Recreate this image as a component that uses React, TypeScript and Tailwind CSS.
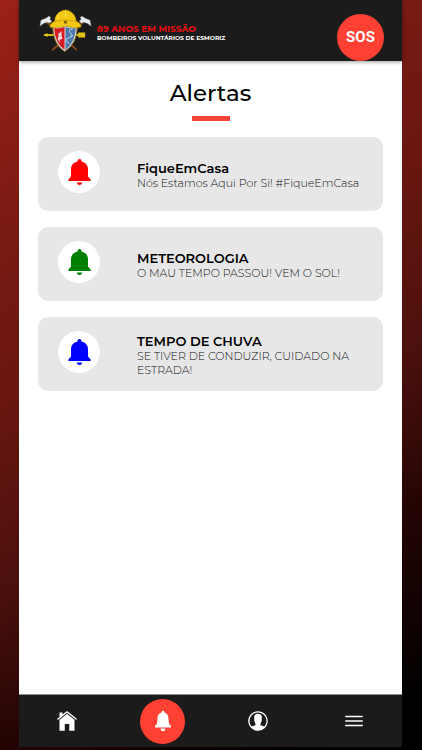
import clsx from "clsx";
import {
  IoIosContact,
  IoIosHome,
  IoIosMenu,
  IoIosNotifications,
} from "react-icons/io";

const alerts = [
  {
    title: "FiqueEmCasa",
    text: "Nós Estamos Aqui Por Si! #FiqueEmCasa",
    color: "text-[#ff0000]",
  },
  {
    title: "METEOROLOGIA",
    text: "O MAU TEMPO PASSOU! VEM O SOL!",
    color: "text-[#008000]",
  },
  {
    title: "TEMPO DE CHUVA",
    text: "SE TIVER DE CONDUZIR, CUIDADO NA ESTRADA!",
    color: "text-[#0000ff]",
  },
];

const App = () => {
  return (
    <div className="min-h-screen bg-[linear-gradient(150deg,#9c2118_0%,#771a12_25%,#6a1710_40%,#4a100d_60%,#240504_75%,#000_95%)] pr-5 pb-[3px] pl-[19px] font-['Montserrat','Inter',sans-serif] text-black">
      <div className="flex min-h-[calc(100vh-3px)] flex-col bg-white">
        <Header />
        <main className="flex-1 px-[19px] pt-[18px] pb-4">
          <h1 className="text-center text-[23px] leading-7 font-medium">
            Alertas
          </h1>
          <div className="mx-auto mt-[9px] h-[5px] w-[38px] bg-[#f44336]" />
          <ul className="mt-4 flex flex-col gap-4">
            {alerts.map((alert) => (
              <AlertCard key={alert.title} {...alert} />
            ))}
          </ul>
        </main>
        <BottomNav />
      </div>
    </div>
  );
};

export default App;

function Header() {
  return (
    <header className="flex h-[61px] items-center bg-[#1b1b1b] pr-[18px] pl-5 shadow-[0_1px_4px_rgba(0,0,0,0.4)]">
      <Crest />
      <div className="ml-[5px] flex-1 pt-1 whitespace-nowrap">
        <p className="text-[9px] leading-[10px] font-bold text-[#e60c12]">
          89 ANOS EM MISSÃO
        </p>
        <p className="text-[6px] leading-[8px] font-bold text-white">
          BOMBEIROS VOLUNTÁRIOS DE ESMORIZ
        </p>
      </div>
      <button className="size-[47px] self-end rounded-full bg-[#ff4032] font-['Roboto',sans-serif] text-[15px] font-bold text-white">
        SOS
      </button>
    </header>
  );
}

function AlertCard({
  title,
  text,
  color,
}: {
  title: string;
  text: string;
  color: string;
}) {
  return (
    <li className="flex min-h-[74px] rounded-[10px] bg-[#e7e7e7] pr-4 pl-5">
      <div className="mt-[14px] flex size-[42px] shrink-0 items-center justify-center rounded-full bg-white">
        <Bell className={clsx("h-[26px] w-[23px]", color)} />
      </div>
      <div className="ml-[37px] flex-1 self-center pt-px">
        <h2 className="text-[13px] leading-4 font-semibold">{title}</h2>
        <p className="text-[11px] leading-[14px] font-light text-[#111]">
          {text}
        </p>
      </div>
    </li>
  );
}

function BottomNav() {
  return (
    <nav className="grid h-[53px] grid-cols-4 items-center justify-items-center border-t border-[#8a8f8a] bg-[#1b1b1b] text-white">
      <a href="#home" aria-label="Início">
        <IoIosHome className="size-6" />
      </a>
      <a
        href="#alertas"
        aria-label="Alertas"
        className="flex size-[45px] items-center justify-center rounded-full bg-[#ff4032]"
      >
        <IoIosNotifications className="size-[26px]" />
      </a>
      <a href="#perfil" aria-label="Perfil">
        <IoIosContact className="size-6" />
      </a>
      <a href="#menu" aria-label="Menu">
        <IoIosMenu className="size-6" />
      </a>
    </nav>
  );
}

function Bell({ className }: { className?: string }) {
  return (
    <svg
      viewBox="0 0 23 26"
      fill="currentColor"
      className={className}
      aria-hidden="true"
    >
      <path d="M11.5 0a2 2 0 0 1 2 2v.6c4 .9 6.500 3.800 6.500 7.800v7.100l2.600 2.900v1.500H.4v-1.500L3 17.500v-7.100c0-4 2.500-6.900 6.500-7.800V2a2 2 0 0 1 2-2z" />
      <path d="M8.700 23.500h5.600q-.5 2.500-2.800 2.500t-2.800-2.500z" />
    </svg>
  );
}

function Crest() {
  return (
    <svg viewBox="0 0 54 44" className="h-11 w-[53px]" aria-hidden="true">
      {/* crossed axes */}
      <g stroke="#8a4a16" strokeWidth="2" strokeLinecap="round">
        <path d="M7 12 38 41" />
        <path d="M46 12 14 41" />
      </g>
      <g fill="#e9edf0" stroke="#8f979c" strokeWidth="0.4">
        <path d="m1 17 1-6 5-2 3-2 2 1-1 2 2 2-2 2-2-1-4 1z" />
        <path d="m53 17-1-6-5-2-3-2-2 1 1 2-2 2 2 2 2-1 4 1z" />
      </g>
      {/* hose nozzle */}
      <path d="M5 26h41" stroke="#d9b50f" strokeWidth="2" />
      <path d="M40 23.500h7v5h-7zM7 24.500h2v3H7z" fill="#e6c416" />
      {/* shield */}
      <path
        d="M14 17q6 2 12-1 7 3 13 1 0 18-13 26-12-8-12-26z"
        fill="#d7d9da"
        stroke="#8c7420"
        strokeWidth="1"
      />
      <path d="M15.500 19q5 1 10.500-1v23q-10-7-10.500-22z" fill="#d81920" />
      <path d="M27 18q5 2 10.500 1-1 15-10.500 22z" fill="#4b79ad" />
      <path d="m19 22 1 3 3-3v5l1 3-3 1v3l-2-4 1-3z" fill="#f4dcdc" />
      <path
        d="M34 20q-5 1-2 4t-2 5 1 6M35 26l-3 3"
        fill="none"
        stroke="#c3d3e2"
        strokeWidth="1"
      />
      {/* helmet */}
      <path
        d="M11 18q0-4 5-6 0-8 8-11 3-1 6 0 7 3 8 11 5 2 5 6-8 2-16-1-9 3-16 1z"
        fill="#f2c814"
        stroke="#a88005"
        strokeWidth="0.5"
      />
      <path d="M16 12q10-2 22 0" fill="none" stroke="#c4990a" strokeWidth="0.8" />
      <path d="M21 4q-2 3-2 6M27 1v7" stroke="#ffe65e" fill="none" />
      <circle cx="27" cy="13" r="1.600" fill="#80600a" />
    </svg>
  );
}
